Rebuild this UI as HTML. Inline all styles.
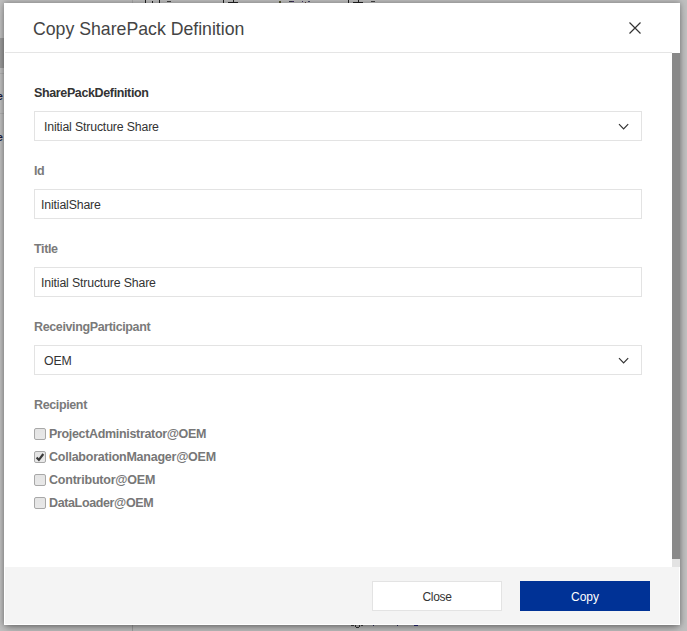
<!DOCTYPE html>
<html>
<head>
<meta charset="utf-8">
<style>
html,body{margin:0;padding:0;}
body{width:687px;height:631px;overflow:hidden;position:relative;background:#bfbfbf;font-family:"Liberation Sans",sans-serif;}
.abs{position:absolute;}
.mk{position:absolute;background:#222;}
.dlg{position:absolute;left:4px;top:3px;width:676px;height:622px;background:#fff;box-shadow:0 0 6px 0 rgba(0,0,0,0.38),0 6px 8px -3px rgba(0,0,0,0.25);}
.hdr{position:absolute;left:1px;top:0;width:667px;height:49px;border-bottom:1px solid #e5e5e5;}
.title{position:absolute;left:28px;top:16px;font-size:17.7px;color:#444;white-space:nowrap;}
.lbl{position:absolute;left:30px;font-size:12.5px;letter-spacing:-0.37px;font-weight:bold;white-space:nowrap;}
.box{position:absolute;left:30px;width:606px;height:28px;border:1px solid #e3e3e3;background:#fff;}
.box span{position:absolute;top:8px;font-size:12.3px;letter-spacing:-0.15px;color:#333;white-space:nowrap;}
.chev{position:absolute;left:583px;top:10.8px;}
.cb{position:absolute;left:30px;width:10px;height:10px;border:1px solid #a8a8a8;border-radius:2px;background:linear-gradient(#e4e4e4,#e8e8e8);}
.cbl{position:absolute;left:45px;font-size:12.5px;letter-spacing:-0.37px;font-weight:bold;color:#777;white-space:nowrap;}
.footer{position:absolute;left:1px;top:564px;width:674px;height:57px;background:#f4f4f4;}
.btn{position:absolute;top:14px;width:128px;height:28px;font-size:12px;text-align:center;line-height:30px;}
.sb{position:absolute;left:668px;top:50px;width:8px;height:514px;background:#e3e3e3;}
.sbt{position:absolute;left:0;top:0;width:8px;height:506px;background:#898989;}
</style>
</head>
<body>
<!-- background page bits -->
<div class="abs" style="left:0;top:38px;width:4px;height:30px;background:#9a9a9a"></div>
<div class="abs" style="left:0;top:73px;width:4px;height:1px;background:#b0b0b0"></div>
<div class="abs" style="left:0;top:113px;width:4px;height:1px;background:#b0b0b0"></div>
<div class="abs" style="left:-3px;top:90px;font-size:10.5px;color:#1a1a40;font-weight:bold">e</div>
<div class="abs" style="left:-3px;top:131px;font-size:10.5px;color:#1a1a40;font-weight:bold">e</div>
<div class="mk" style="left:145px;top:0;width:1px;height:3px"></div>
<div class="mk" style="left:152px;top:1px;width:1px;height:2px"></div>
<div class="mk" style="left:159px;top:0;width:1px;height:3px"></div>
<div class="mk" style="left:167px;top:1px;width:4px;height:1px;background:#444"></div>
<div class="mk" style="left:223px;top:0;width:1px;height:3px"></div>
<div class="mk" style="left:228px;top:2px;width:10px;height:1px"></div>
<div class="mk" style="left:233px;top:0;width:1px;height:3px"></div>
<div class="mk" style="left:279px;top:1px;width:2px;height:2px;background:#553"></div>
<div class="mk" style="left:289px;top:1px;width:3px;height:1px;background:#334"></div>
<div class="mk" style="left:292px;top:1px;width:2px;height:1px;background:#436"></div>
<div class="mk" style="left:302px;top:1px;width:1px;height:1px;background:#436"></div>
<div class="mk" style="left:305px;top:2px;width:1px;height:1px;background:#644"></div>
<div class="mk" style="left:308px;top:1px;width:2px;height:1px;background:#446"></div>
<div class="abs" style="left:132px;top:0;width:1px;height:3px;background:#aaa"></div>
<div class="mk" style="left:348px;top:0;width:1px;height:3px"></div>
<div class="mk" style="left:353px;top:2px;width:10px;height:1px"></div>
<div class="mk" style="left:358px;top:0;width:1px;height:3px"></div>
<div class="mk" style="left:371px;top:1px;width:4px;height:1px;background:#444"></div>
<div class="abs" style="left:132px;top:625px;width:1px;height:6px;background:#a0a0a0"></div>
<div class="abs" style="left:351px;top:625px;width:3px;height:1px;background:#444"></div>
<div class="abs" style="left:355px;top:625px;width:1px;height:2px;background:#333"></div>
<div class="abs" style="left:359px;top:625px;width:1px;height:2px;background:#333"></div>
<div class="abs" style="left:356px;top:627px;width:3px;height:1px;background:#333"></div>
<div class="abs" style="left:361px;top:625px;width:2px;height:1px;background:#444"></div>
<div class="abs" style="left:373px;top:625px;width:1px;height:1px;background:#2a2a60"></div>
<div class="abs" style="left:397px;top:625px;width:1px;height:1px;background:#2a2a60"></div>
<div class="abs" style="left:414px;top:625px;width:4px;height:1px;background:#2a2a80"></div>

<div class="dlg">
  <div class="hdr">
    <div class="title">Copy SharePack Definition</div>
    <svg class="abs" style="left:623px;top:18px" width="14" height="14" viewBox="0 0 14 14"><path d="M1.5 1.5L12.5 12.5M12.5 1.5L1.5 12.5" stroke="#333" stroke-width="1.2" fill="none"/></svg>
  </div>

  <div class="lbl" style="top:83px;color:#333">SharePackDefinition</div>
  <div class="box" style="top:108px"><span style="left:9px">Initial Structure Share</span>
    <svg class="chev" width="12" height="7" viewBox="0 0 12 7"><path d="M1 1.2L5.6 5.8L10.2 1.2" stroke="#333" stroke-width="1.2" fill="none"/></svg></div>

  <div class="lbl" style="top:161px;color:#7a7a7a">Id</div>
  <div class="box" style="top:186px"><span style="left:6px">InitialShare</span></div>

  <div class="lbl" style="top:239px;color:#7a7a7a">Title</div>
  <div class="box" style="top:264px"><span style="left:6px">Initial Structure Share</span></div>

  <div class="lbl" style="top:317px;color:#7a7a7a">ReceivingParticipant</div>
  <div class="box" style="top:342px"><span style="left:9px">OEM</span>
    <svg class="chev" width="12" height="7" viewBox="0 0 12 7"><path d="M1 1.2L5.6 5.8L10.2 1.2" stroke="#333" stroke-width="1.2" fill="none"/></svg></div>

  <div class="lbl" style="top:395px;color:#7a7a7a">Recipient</div>

  <div class="cb" style="top:425px"></div><div class="cbl" style="top:424px;letter-spacing:-0.33px">ProjectAdministrator@OEM</div>
  <div class="cb" style="top:448px"><svg class="abs" style="left:0;top:0" width="10" height="10" viewBox="0 0 10 10"><path d="M1.6 5.4L3.9 7.9L8.3 2" stroke="#3a3a3a" stroke-width="2.2" fill="none"/></svg></div><div class="cbl" style="top:447px;letter-spacing:-0.24px">CollaborationManager@OEM</div>
  <div class="cb" style="top:471px"></div><div class="cbl" style="top:470px;letter-spacing:-0.22px">Contributor@OEM</div>
  <div class="cb" style="top:494px"></div><div class="cbl" style="top:493px">DataLoader@OEM</div>

  <div class="sb"><div class="sbt"></div></div>

  <div class="footer">
    <div class="btn" style="left:367px;background:#fff;border:1px solid #e3e3e3;color:#333;letter-spacing:-0.3px">Close</div>
    <div class="btn" style="left:515px;background:#003296;border:1px solid #003296;color:#fff">Copy</div>
  </div>
</div>
</body>
</html>
